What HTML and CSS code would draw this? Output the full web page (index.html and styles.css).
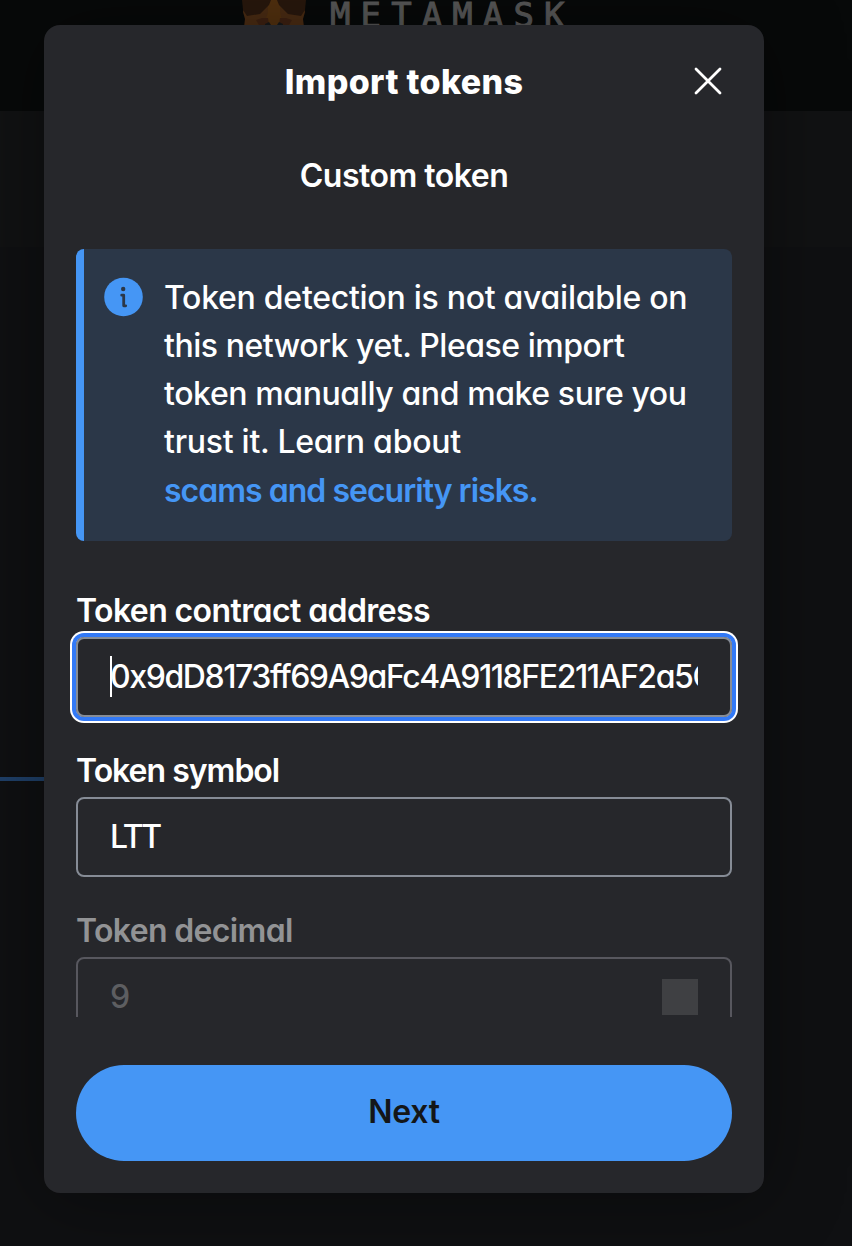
FILE: index.html
```html
<!DOCTYPE html>
<html lang="en">
<head>
<meta charset="utf-8">
<title>Import tokens</title>
<link rel="stylesheet" href="styles.css">
</head>
<body>
<div class="page">
  <header class="brand">
    <svg class="fox" width="64" height="60" viewBox="0 0 64 60" aria-hidden="true">
      <path fill="#4b2c13" d="M3 0h58l2 12-2 7 2 16-8 20H10L1 35l2-16-2-7z"/>
      <path fill="#53310f" d="M26 0h12v12l3 13v20H22V25l4-13z"/>
      <path fill="#29180d" d="M0 0h29l-2 5-9 9-13 2-4-6zM64 0H35l2 5 9 9 13 2 4-6z"/>
      <path fill="#3e2111" d="m14 20 6-2h6l1 7H17zM50 20l-6-2h-6l-1 7h10z"/>
      <path fill="#17191a" d="m23 24 4-2 2 3h-6zM41 24l-4-2-2 3h6z"/>
    </svg>
    <span class="wordmark">METAMASK</span>
  </header>
  <div class="network-bar"></div>
  <div class="account"><div class="tab-line"></div></div>
</div>
<div class="overlay">
  <section class="modal">
    <header class="modal-header">
      <h1 class="title">Import tokens</h1>
      <svg class="close" width="32" height="32" viewBox="0 0 32 32" aria-label="Close"><path d="M4 4l24 24M28 4L4 28" fill="none" stroke="#fff" stroke-width="2.8" stroke-linecap="round"/></svg>
    </header>
    <div class="scroll">
      <h2 class="subtitle">Custom token</h2>
      <div class="banner">
        <svg class="info" width="40" height="40" viewBox="0 0 40 40" aria-hidden="true"><circle cx="19.5" cy="20" r="19.3" fill="#4596f5"/><circle cx="19.2" cy="12" r="2.2" fill="#2b3748"/><path d="M17.7 18.2h2v10.6h2" fill="none" stroke="#2b3748" stroke-width="2.8" stroke-linecap="round" stroke-linejoin="round"/></svg>
        <p class="message">
          <span class="line l1">Token detection is not available on</span>
          <span class="line l2">this network yet. Please import</span>
          <span class="line l3">token manually and make sure you</span>
          <span class="line l4">trust it. Learn about</span>
          <a class="line link">scams and security risks.</a>
        </p>
      </div>
      <div class="field">
        <label class="label address-label" for="address">Token contract address</label>
        <div class="box focused"><input class="input address" id="address" value="0x9dD8173ff69A9aFc4A9118FE211AF2a5C"><span class="caret"></span></div>
      </div>
      <div class="field">
        <label class="label symbol-label" for="symbol">Token symbol</label>
        <div class="box"><input class="input symbol" id="symbol" value="LTT"></div>
      </div>
      <div class="field disabled">
        <label class="label decimal-label" for="decimal">Token decimal</label>
        <div class="box"><input class="input decimal" id="decimal" value="9" disabled><span class="spinner"></span></div>
      </div>
    </div>
    <footer class="footer"><button class="next">Next</button></footer>
  </section>
</div>
</body>
</html>
```

FILE: styles.css
```css
* { box-sizing: border-box; }
body {
  margin: 0;
  background: #0f1011;
  color: #fff;
  font-family: Inter, "Open Sans", sans-serif;
  font-feature-settings: "cv11";
}
.page { height: 1246px; overflow: hidden; }
.brand {
  display: flex;
  align-items: flex-start;
  height: 111px;
  padding-left: 242px;
  background: #070909;
}
.wordmark {
  margin: -5px 0 0 24px;
  color: #595959;
  font: 34px/40px "DejaVu Sans Mono", monospace;
  letter-spacing: 10.1px;
  -webkit-text-stroke: 1px #595959;
}
.network-bar { height: 136px; background: #111213; }
.account { height: 999px; padding-top: 530px; background: #0f1012; }
.tab-line { width: 160px; height: 4px; background: #1f4069; }
.overlay {
  position: absolute;
  inset: 0;
  padding: 25px 88px 53px 44px;
}
.modal {
  display: flex;
  flex-direction: column;
  width: 720px;
  height: 1168px;
  border-radius: 16px;
  background: #26272b;
  box-shadow: 0 4px 80px rgba(0, 0, 0, .4);
}
.modal-header {
  display: grid;
  grid-template-columns: 32px 1fr 32px;
  align-items: center;
  height: 112px;
  padding: 0 40px;
}
.title {
  grid-column: 2;
  margin: 0;
  text-align: center;
  font-size: 34px;
  font-weight: 800;
  letter-spacing: .35px;
}
.close { display: block; }
.scroll { height: 880px; padding: 0 32px; overflow: hidden; }
.subtitle {
  margin: 14px 0 48px;
  text-align: center;
  font-size: 32px;
  font-weight: 600;
  line-height: 50px;
  letter-spacing: -.5px;
}
.banner {
  display: flex;
  gap: 20px;
  height: 292px;
  padding: 24px 20px;
  border-left: 8px solid #4596f5;
  border-radius: 8px;
  background: #2b3748;
}
.info { flex: none; margin-top: 4px; }
.message {
  margin: 1px 0 0;
  font-size: 32px;
  font-weight: 450;
  line-height: 48px;
  white-space: nowrap;
}
.line { display: block; }
.l1 { letter-spacing: -.27px; }
.l2 { letter-spacing: -.46px; }
.l3 { letter-spacing: -.4px; }
.l4 { letter-spacing: -.26px; }
.link {
  padding-top: 1px;
  color: #4596f5;
  font-weight: 600;
  letter-spacing: -.98px;
}
.field { padding-top: 32px; }
.banner + .field { padding-top: 48px; }
.label {
  display: block;
  height: 48px;
  font-size: 32px;
  font-weight: 600;
  line-height: 44px;
}
.address-label { letter-spacing: -.6px; }
.symbol-label { letter-spacing: -1px; }
.decimal-label { letter-spacing: -.65px; }
.box {
  position: relative;
  display: flex;
  align-items: center;
  height: 80px;
  padding: 0 32px;
  border: 2px solid #868c96;
  border-radius: 8px;
}
.focused { box-shadow: 0 0 0 4px #3279f6, 0 0 0 6px #fff; }
.input {
  flex: 1;
  min-width: 0;
  height: 48px;
  padding: 0 0 2px;
  border: 0;
  outline: 0;
  background: none;
  color: #fff;
  font: inherit;
  font-size: 32px;
  font-weight: 450;
}
.address { letter-spacing: -1.42px; }
.symbol { letter-spacing: -2.4px; }
.caret { position: absolute; left: 32px; top: 17px; width: 2px; height: 41px; background: #fff; }
.disabled .label { color: #929395; }
.disabled .box { border-color: #57575e; }
.disabled .input { color: #5d5e61; }
.spinner { width: 36px; height: 36px; background: #3f4043; }
.footer { padding: 48px 32px 32px; }
.next {
  display: block;
  width: 100%;
  height: 96px;
  padding: 0 0 3px;
  border: 0;
  border-radius: 48px;
  background: #4596f5;
  color: #141618;
  font: inherit;
  font-size: 32px;
  font-weight: 600;
  letter-spacing: -.3px;
}
```
